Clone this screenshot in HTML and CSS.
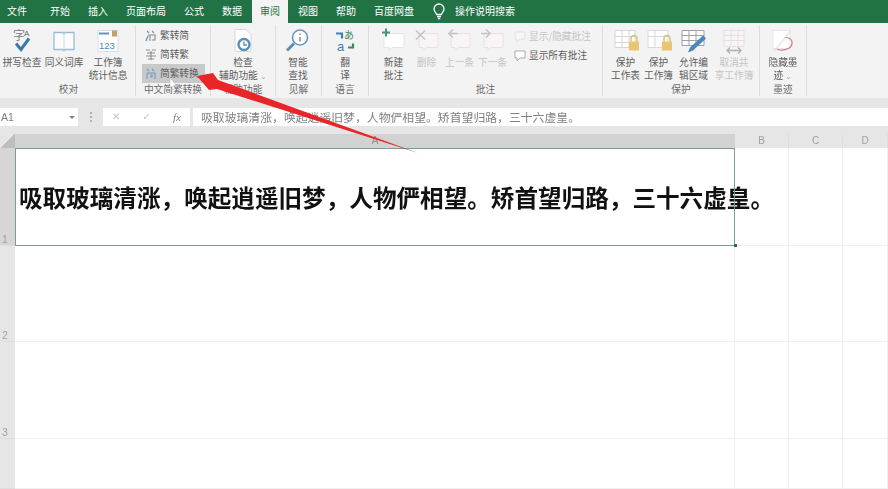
FILE: index.html
```html
<!DOCTYPE html>
<html lang="zh-CN">
<head>
<meta charset="utf-8">
<title>Excel 审阅</title>
<link rel="stylesheet" href="styles.css">
</head>
<body>
<div class="app">
  <nav class="tabs">
    <span class="tab tab-file">文件</span>
    <span class="tab">开始</span>
    <span class="tab">插入</span>
    <span class="tab">页面布局</span>
    <span class="tab">公式</span>
    <span class="tab">数据</span>
    <span class="tab active">审阅</span>
    <span class="tab">视图</span>
    <span class="tab">帮助</span>
    <span class="tab">百度网盘</span>
    <svg class="bulb" width="14" height="17" viewBox="0 0 14 17"><path d="M4.6 11.5C4.2 9.5 2 8.6 2 6a5 5 0 0 1 10 0c0 2.600-2.200 3.500-2.600 5.500z" fill="none" stroke="#fff" stroke-width="1.300"/><path d="M5 13.500h4M5.800 15.500h2.400" stroke="#fff" stroke-width="1.300"/></svg>
    <span class="tab tab-search">操作说明搜索</span>
  </nav>

  <section class="ribbon">
    <div class="group g-proof">
      <div class="items">
        <div class="btn w40">
          <svg class="ico" width="28" height="28" viewBox="0 0 28 28"><text x="5" y="12" class="svg-zi">字</text><text x="16" y="8" class="svg-a">A</text><path d="M8 16l5 6 8-11" fill="none" stroke="#3b78b0" stroke-width="3"/></svg>
          <span>拼写检查</span>
        </div>
        <div class="btn w44">
          <svg class="ico" width="28" height="28" viewBox="0 0 28 28"><path d="M4 5h9l1 1 1-1h9v17H15l-1 1-1-1H4z" fill="#fbfcfd" stroke="#9dbad0" stroke-width="1.300"/><path d="M14 6v16" stroke="#cbd8e2"/></svg>
          <span>同义词库</span>
        </div>
        <div class="btn w44">
          <svg class="ico" width="28" height="28" viewBox="0 0 28 28"><rect x="4" y="3" width="20" height="21" fill="#fff" stroke="#d3dfe8"/><path d="M5 6h10" stroke="#6b93b5" stroke-width="2"/><rect x="18" y="3" width="5" height="6" fill="#c4a063"/><text x="5" y="21" class="svg-num">123</text></svg>
          <span>工作簿<br>统计信息</span>
        </div>
      </div>
      <div class="label">校对</div>
    </div>

    <div class="group g-cn">
      <div class="rows">
        <div class="row">
          <svg width="12" height="13" viewBox="0 0 12 13"><path d="M2 2l2 2M7 2l2 2M3 6h7v5H7M5 6v6" fill="none" stroke="#888" stroke-width="1.100"/><path d="M1 12l2-5" stroke="#5f93c6" stroke-width="1.300"/></svg>
          <span>繁转简</span>
        </div>
        <div class="row">
          <svg width="12" height="13" viewBox="0 0 12 13"><path d="M1 2h4M7 2h4M2 5h8M1 8h10M3 11h6M6 3v9" fill="none" stroke="#8c8c8c" stroke-width="1.100"/></svg>
          <span>简转繁</span>
        </div>
        <div class="row hot">
          <svg width="12" height="13" viewBox="0 0 12 13"><path d="M2 2l2 2M7 2l2 2M2 6h8v6M2 6v6M5 8h2v2H5" fill="none" stroke="#6f9ac4" stroke-width="1.100"/></svg>
          <span>简繁转换</span>
        </div>
      </div>
      <div class="label">中文简繁转换</div>
    </div>

    <div class="group g-acc">
      <div class="items">
        <div class="btn w62">
          <svg class="ico" width="28" height="28" viewBox="0 0 28 28"><path d="M6 2h11l5 5v17H6z" fill="#fff" stroke="#d8d8d8"/><circle cx="15" cy="17" r="5.500" fill="none" stroke="#5a8fb8" stroke-width="2.400"/><path d="M15 14v3.500h3" fill="none" stroke="#5a8fb8" stroke-width="1.300"/></svg>
          <span>检查<br>辅助功能 <i class="caret">⌄</i></span>
        </div>
      </div>
      <div class="label">辅助功能</div>
    </div>

    <div class="group g-ins">
      <div class="items">
        <div class="btn w44">
          <svg class="ico" width="28" height="28" viewBox="0 0 28 28"><circle cx="16" cy="10" r="7.500" fill="#fff" stroke="#6a96ba" stroke-width="1.600"/><path d="M10 16l-7 7" stroke="#5c8cb2" stroke-width="2.800"/><path d="M16 9.500v4.500M16 6v1.500" stroke="#6a96ba" stroke-width="1.500"/></svg>
          <span>智能<br>查找</span>
        </div>
      </div>
      <div class="label">见解</div>
    </div>

    <div class="group g-lang">
      <div class="items">
        <div class="btn w45">
          <svg class="ico" width="28" height="28" viewBox="0 0 28 28"><text x="13" y="11" class="svg-ja">あ</text><text x="6" y="23" class="svg-la">a</text><path d="M5 6h6v5" fill="none" stroke="#3f7fb8" stroke-width="2.200"/><path d="M22 16v4h-5" fill="none" stroke="#3a8a5c" stroke-width="2.200"/></svg>
          <span>翻<br>译</span>
        </div>
      </div>
      <div class="label">语言</div>
    </div>

    <div class="group g-note">
      <div class="items">
        <div class="btn w33 first-note">
          <svg class="ico" width="28" height="28" viewBox="0 0 28 28"><path d="M4 6h20v14H12l-3 3v-3H4z" fill="#fff" stroke="#e4e4e4"/><path d="M6 1v8M2 5h8" stroke="#4a9377" stroke-width="2"/></svg>
          <span>新建<br>批注</span>
        </div>
        <div class="btn w33 off">
          <svg class="ico" width="28" height="28" viewBox="0 0 28 28"><path d="M6 6h19v14H13l-3 3v-3H6z" fill="#f9f4f5" stroke="#e9e0e2"/><path d="M3 3l9 9M12 3l-9 9" stroke="#c4c4c4" stroke-width="1.600"/></svg>
          <span>删除</span>
        </div>
        <div class="btn w33 off">
          <svg class="ico" width="28" height="28" viewBox="0 0 28 28"><path d="M5 6h19v14H12l-3 3v-3H5z" fill="#f9f4f5" stroke="#e9e0e2"/><path d="M12 6H3M7 2L3 6l4 4" fill="none" stroke="#c4c4c4" stroke-width="1.600"/></svg>
          <span>上一条</span>
        </div>
        <div class="btn w33 off">
          <svg class="ico" width="28" height="28" viewBox="0 0 28 28"><path d="M5 6h19v14H12l-3 3v-3H5z" fill="#f9f4f5" stroke="#e9e0e2"/><path d="M2 6h9M7 2l4 4-4 4" fill="none" stroke="#c4c4c4" stroke-width="1.600"/></svg>
          <span>下一条</span>
        </div>
        <div class="rows note-rows">
          <div class="row off">
            <svg width="12" height="13" viewBox="0 0 12 13"><path d="M1 2h10v7H6l-3 3V9H1z" fill="#f9f6f7" stroke="#e2e2e2"/></svg>
            <span>显示/隐藏批注</span>
          </div>
          <div class="row">
            <svg width="12" height="13" viewBox="0 0 12 13"><path d="M1 2h10v7H6l-3 3V9H1z" fill="#fff" stroke="#aaa"/></svg>
            <span>显示所有批注</span>
          </div>
        </div>
      </div>
      <div class="label">批注</div>
    </div>

    <div class="group g-prot">
      <div class="items">
        <div class="btn w33 first-prot">
          <svg class="ico" width="32" height="28" viewBox="0 0 32 28"><path d="M5 3h20v17H5zM5 9h20M5 15h20M12 3v17M19 3v17" fill="#fff" stroke="#d6d6d6"/><path d="M21 14v-3a3 3 0 0 1 6 0v3" fill="none" stroke="#dcc078" stroke-width="1.500"/><rect x="19" y="14" width="10" height="9" fill="#eac373"/></svg>
          <span>保护<br>工作表</span>
        </div>
        <div class="btn w33">
          <svg class="ico" width="32" height="28" viewBox="0 0 32 28"><path d="M5 3h20v17H5zM5 9h20M12 3v17" fill="#fdfdfd" stroke="#dadada"/><path d="M21 14v-3a3 3 0 0 1 6 0v3" fill="none" stroke="#dcc078" stroke-width="1.500"/><rect x="19" y="14" width="10" height="9" fill="#eac373"/></svg>
          <span>保护<br>工作簿</span>
        </div>
        <div class="btn w37">
          <svg class="ico" width="32" height="28" viewBox="0 0 32 28"><path d="M4 3h22v15H4zM4 8h22M4 13h22M11 3v15M18 3v15" fill="#fff" stroke="#a0a0a0"/><path d="M10 25l2-5 13-12 3 3-13 12z" fill="#4a86c0"/></svg>
          <span>允许编<br>辑区域</span>
        </div>
        <div class="btn w44 off">
          <svg class="ico" width="32" height="28" viewBox="0 0 32 28"><path d="M6 3h20v16H6zM6 8h20M6 13h20M13 3v16M20 3v16" fill="#f9f4f6" stroke="#e2dee2"/><path d="M9 23h14M12 20l-3 3 3 3M20 20l3 3-3 3" fill="none" stroke="#b0b0b0" stroke-width="1.300"/></svg>
          <span>取消共<br>享工作簿</span>
        </div>
      </div>
      <div class="label">保护</div>
    </div>

    <div class="group g-ink">
      <div class="items">
        <div class="btn w46">
          <svg class="ico" width="28" height="28" viewBox="0 0 28 28"><path d="M4 3h17v18H4z" fill="#fff" stroke="#e6e6e6"/><path d="M5 24L22 3" stroke="#d6d6d6"/><path d="M8 22c9 2 16-2 15-8-1-3-4-4-7-4" fill="none" stroke="#d0837e" stroke-width="1.200"/></svg>
          <span>隐藏墨<br>迹 <i class="caret">⌄</i></span>
        </div>
      </div>
      <div class="label">墨迹</div>
    </div>
  </section>

  <section class="formula">
    <div class="namebox"><span>A1</span><i class="caret-down"></i></div>
    <div class="dots"><i></i><i></i><i></i></div>
    <div class="fxbox">
      <span class="fx-x">✕</span>
      <span class="fx-ok">✓</span>
      <span class="fx-f">fx</span>
    </div>
    <div class="input">吸取玻璃清涨，唤起逍遥旧梦，人物俨相望。矫首望归路，三十六虚皇。</div>
  </section>

  <section class="sheet">
    <div class="corner"></div>
    <div class="col sel">A</div>
    <div class="col">B</div>
    <div class="col">C</div>
    <div class="col">D</div>

    <div class="rowhead sel">1</div>
    <div class="cell a1"><span>吸取玻璃清涨，唤起逍遥旧梦，人物俨相望。矫首望归路，三十六虚皇。</span></div>
    <div class="cell"></div><div class="cell"></div><div class="cell"></div>

    <div class="rowhead">2</div>
    <div class="cell"></div><div class="cell"></div><div class="cell"></div><div class="cell"></div>

    <div class="rowhead">3</div>
    <div class="cell"></div><div class="cell"></div><div class="cell"></div><div class="cell"></div>

    <div class="rowhead"></div>
    <div class="cell"></div><div class="cell"></div><div class="cell"></div><div class="cell"></div>
  </section>

  <svg class="overlay" width="888" height="489" viewBox="0 0 888 489">
    <path d="M170 78v10l2-2 1.500 3.500 1.500-.8-1.500-3.200h3z" fill="#fff" stroke="#b5b5b5" stroke-width=".5"/>
    <path d="M197 76L213 73 218 80 418 153 217 89 209 90z" fill="#e8262a"/>
  </svg>
</div>
</body>
</html>
```

FILE: styles.css
```css
* { box-sizing: border-box; }
html, body { margin: 0; padding: 0; background: #fff; }
body { font-family: "Noto Sans CJK SC", "Noto Sans", sans-serif; }

.app {
  position: relative;
  width: 888px;
  height: 489px;
  overflow: hidden;
  display: flex;
  flex-direction: column;
  filter: blur(0.55px);
}

/* tab strip */
.tabs {
  flex: 0 0 23px;
  display: flex;
  align-items: stretch;
  gap: 2px;
  background: #217346;
  color: #fff;
  font-size: 10px;
}
.tab {
  padding: 0 8px;
  line-height: 22px;
  white-space: nowrap;
}
.tab-file { margin-left: -1px; margin-right: 5px; }
.tab.active { background: #f3f3f3; color: #217346; }
.bulb { align-self: center; margin-left: 8px; }
.tab-search { margin-left: -1px; }

/* ribbon */
.ribbon {
  flex: 0 0 75px;
  display: flex;
  background: #f3f3f3;
  padding-top: 2px;
  color: #5c5c5c;
  font-size: 9.700px;
  line-height: 13px;
}
.group {
  display: flex;
  flex-direction: column;
  border-right: 1px solid #dedede;
  margin-bottom: 2px;
}
.g-proof { width: 136px; padding-left: 2px; }
.g-cn { width: 75px; }
.g-acc { width: 65px; }
.g-ins { width: 46px; }
.g-lang { width: 47px; }
.g-note { width: 234px; }
.g-prot { width: 157px; }
.g-ink { width: 47px; }

.items {
  flex: 1;
  display: flex;
  justify-content: flex-start;
  padding-top: 2px;
}
.label {
  flex: 0 0 13px;
  line-height: 13px;
  text-align: center;
  font-size: 9.700px;
  color: #6a6a6a;
  white-space: nowrap;
}

.btn {
  display: flex;
  flex-direction: column;
  align-items: center;
  text-align: center;
  white-space: nowrap;
}
.btn .ico { flex: 0 0 29px; height: 29px; }
.btn span { display: block; }
.w33 { width: 33px; }
.w37 { width: 37px; }
.w40 { width: 40px; }
.w44 { width: 44px; }
.w45 { width: 46px; }
.w46 { width: 46px; }
.w62 { width: 64px; }
.first-note { margin-left: 8px; }
.first-prot { margin-left: 6px; }
.off { color: #c4c4c4; }
.caret { font-style: normal; color: #aaa; font-size: 8px; }

.rows {
  flex: 1;
  display: flex;
  flex-direction: column;
  padding: 1px 5px 0 6px;
}
.row {
  height: 19px;
  display: flex;
  align-items: center;
  gap: 3px;
  padding-left: 3px;
  white-space: nowrap;
}
.row svg { flex: 0 0 12px; }
.row.hot { background: #c9c9c9; width: 63px; }
.note-rows { padding: 0 0 0 2px; }

.svg-zi { font: 12px "Noto Sans CJK SC", sans-serif; fill: #808080; }
.svg-a { font: 8px "Liberation Sans", sans-serif; fill: #666; }
.svg-num { font: 9.500px "Liberation Sans", sans-serif; fill: #4a86b8; }
.svg-ja { font: 10px "Noto Sans CJK JP", sans-serif; fill: #3a8a5c; }
.svg-la { font: 13px "Liberation Sans", sans-serif; fill: #3f7fb8; }

/* formula bar */
.formula {
  flex: 0 0 36px;
  display: flex;
  align-items: flex-start;
  padding-top: 10px;
  background: #e6e6e6;
  color: #808080;
}
.namebox {
  width: 78px;
  height: 18px;
  background: #fff;
  display: flex;
  align-items: center;
  justify-content: space-between;
  padding: 0 3px 0 1px;
  font: 10.500px/18px "Liberation Sans", sans-serif;
}
.caret-down {
  width: 0; height: 0;
  border: 3px solid transparent;
  border-top-color: #808080;
  border-bottom-width: 0;
}
.dots {
  width: 25px;
  height: 18px;
  display: flex;
  flex-direction: column;
  align-items: center;
  justify-content: center;
  gap: 2px;
}
.dots i { width: 2px; height: 2px; background: #b0b0b0; }
.fxbox {
  width: 87px;
  height: 18px;
  background: #fff;
  display: flex;
  align-items: center;
  justify-content: space-between;
  padding: 0 9px;
  font: 10px/18px "DejaVu Sans", sans-serif;
  color: #c0c0c0;
}
.fx-f { font: italic 11px "Liberation Serif", serif; color: #808080; }
.input {
  flex: 1;
  height: 18px;
  margin-left: 3px;
  padding-left: 8px;
  background: #fff;
  font-size: 11.850px;
  line-height: 17px;
  white-space: nowrap;
}

/* sheet */
.sheet {
  flex: 1;
  display: grid;
  grid-template-columns: 15px 720px 54px 54px 45px;
  grid-template-rows: 14px 97.500px 96.500px 96.500px 1fr;
}
.corner {
  background-image: linear-gradient(135deg, #e6e6e6 50%, #bcbfbd 50%);
}
.col {
  background: #e6e6e6;
  color: #a0a0a0;
  font: 10px/14px "Liberation Sans", sans-serif;
  text-align: center;
  border-right: 1px solid #dedede;
}
.col.sel { background: #d2d2d2; color: #8c8c8c; border-right: 0; }
.rowhead {
  background: #e6e6e6;
  color: #a0a0a0;
  font: 10.500px/11px "Liberation Sans", sans-serif;
  display: flex;
  align-items: flex-end;
  padding: 0 0 0 2px;
  border-bottom: 1px solid #dedede;
}
.rowhead.sel { background: #d6d6d6; }
.cell {
  border-right: 1px solid #f0f0f0;
  border-bottom: 1px solid #f0f0f0;
}
.a1 {
  position: relative;
  display: flex;
  align-items: center;
  padding-left: 4px;
  border: 0;
  color: #111;
  font-size: 23.600px;
  font-weight: 700;
  white-space: nowrap;
}
.a1::before {
  content: "";
  position: absolute;
  inset: 0;
  border: 1.500px solid #7d9b90;
  z-index: 2;
}
.a1::after {
  content: "";
  position: absolute;
  right: -1.500px;
  bottom: -1.500px;
  width: 3px;
  height: 3px;
  background: #217346;
  z-index: 3;
}

.overlay {
  position: absolute;
  left: 0;
  top: 0;
  z-index: 5;
}
```
